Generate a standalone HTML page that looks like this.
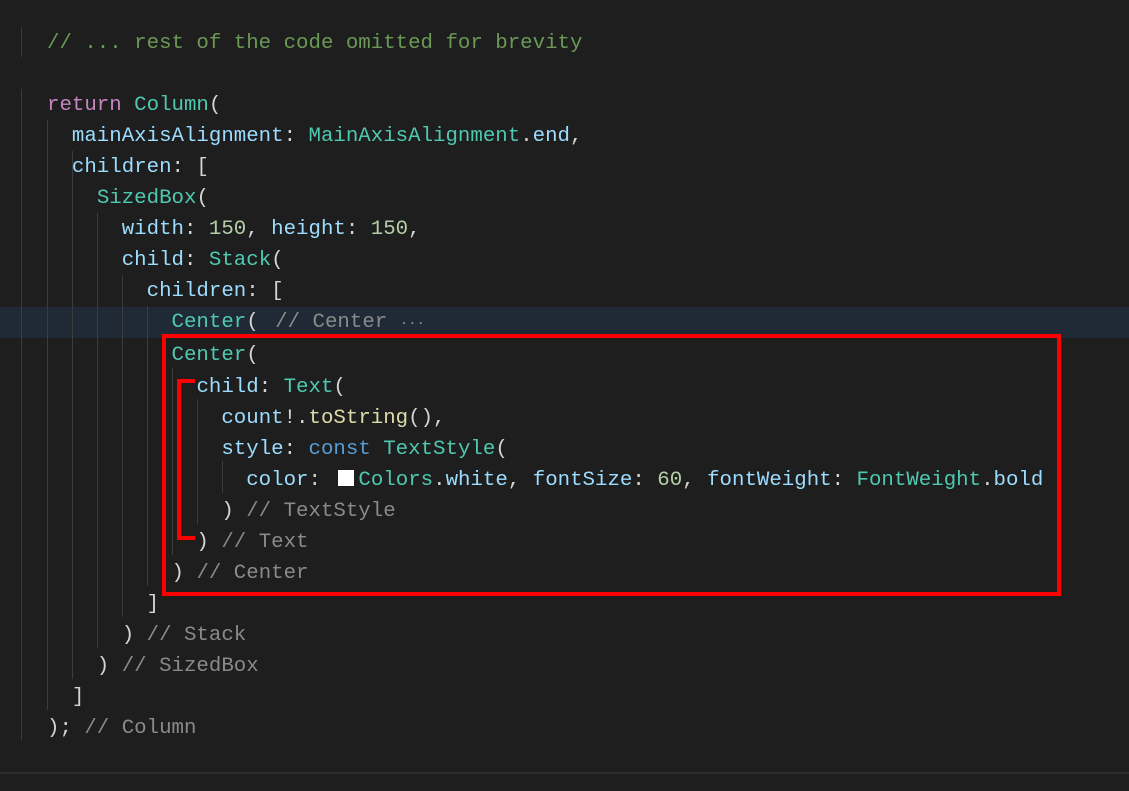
<!DOCTYPE html>
<html><head><meta charset="utf-8"><style>
html,body{margin:0;padding:0;background:#1e1e1e;width:1129px;height:791px;overflow:hidden;position:relative}
pre{position:absolute;left:47px;top:28px;margin:0;font-family:"Liberation Mono",monospace;font-size:20.75px;line-height:31.05px;color:#d4d4d4;white-space:pre}
.c{color:#6a9955}.k{color:#c586c0}.t{color:#4ec9b0}.p{color:#9cdcfe}.n{color:#b5cea8}.f{color:#dcdcaa}.b{color:#569cd6}.g{color:#8a8a8a}
.gd{position:absolute;width:1px;background:#3c3c3c}
.hl{position:absolute;left:0;top:307px;width:1129px;height:31px;background:#1f2a36}
.sq{display:inline-block;width:16px;height:16px;background:#fff;margin-left:5px;margin-right:4px;vertical-align:-1px}
</style></head><body>
<div class="hl"></div>
<div class="gd" style="left:21px;top:27px;height:30px"></div>
<div class="gd" style="left:21px;top:89px;height:651px"></div>
<div class="gd" style="left:47px;top:120px;height:590px"></div>
<div class="gd" style="left:72px;top:151px;height:528px"></div>
<div class="gd" style="left:97px;top:213px;height:435px"></div>
<div class="gd" style="left:122px;top:275px;height:342px"></div>
<div class="gd" style="left:147px;top:306px;height:280px"></div>
<div class="gd" style="left:172px;top:368px;height:187px"></div>
<div class="gd" style="left:197px;top:399px;height:125px"></div>
<div class="gd" style="left:222px;top:461px;height:32px"></div>
<pre><span class="c">// ... rest of the code omitted for brevity</span>

<span class="k">return</span> <span class="t">Column</span>(
  <span class="p">mainAxisAlignment</span>: <span class="t">MainAxisAlignment</span>.<span class="p">end</span>,
  <span class="p">children</span>: [
    <span class="t">SizedBox</span>(
      <span class="p">width</span>: <span class="n">150</span>, <span class="p">height</span>: <span class="n">150</span>,
      <span class="p">child</span>: <span class="t">Stack</span>(
        <span class="p">children</span>: [
          <span class="t">Center</span>( <span class="g" style="margin-left:4px">// Center</span> <span class="g" style="font-size:14px">···</span>
          <span class="t">Center</span>(
            <span class="p">child</span>: <span class="t">Text</span>(
              <span class="p">count</span>!.<span class="f">toString</span>(),
              <span class="p">style</span>: <span class="b">const</span> <span class="t">TextStyle</span>(
                <span class="p">color</span>: <span class="sq" style="margin-left:5px"></span><span class="t">Colors</span>.<span class="p">white</span>, <span class="p">fontSize</span>: <span class="n">60</span>, <span class="p">fontWeight</span>: <span class="t">FontWeight</span>.<span class="p">bold</span>
              ) <span class="g">// TextStyle</span>
            ) <span class="g">// Text</span>
          ) <span class="g">// Center</span>
        ]
      ) <span class="g">// Stack</span>
    ) <span class="g">// SizedBox</span>
  ]
); <span class="g">// Column</span></pre>
<div style="position:absolute;left:162px;top:334px;width:891px;height:254px;border:4px solid #f00"></div>
<div style="position:absolute;left:177px;top:379px;width:4px;height:161px;background:#f00"></div>
<div style="position:absolute;left:177px;top:379px;width:18px;height:4px;background:#f00"></div>
<div style="position:absolute;left:177px;top:536px;width:18px;height:4px;background:#f00"></div>
<div style="position:absolute;left:0;top:772px;width:1129px;height:2px;background:#2e2e2e"></div>
</body></html>
